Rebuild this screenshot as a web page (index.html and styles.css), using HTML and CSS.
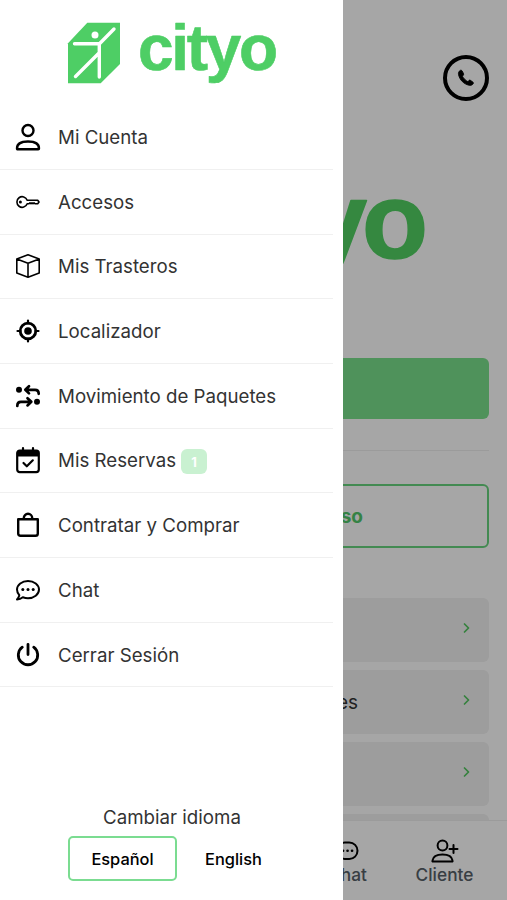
FILE: index.html
```html
<!DOCTYPE html>
<html lang="es">
<head>
  <meta charset="UTF-8">
  <meta name="viewport" content="width=device-width, initial-scale=1">
  <title>cityo</title>
  <link rel="stylesheet" href="styles.css">
</head>
<body>
  <div class="page">
    <header class="topbar">
      <button class="phone" aria-label="Llamar">
        <svg width="18" height="18" viewBox="0 0 20 20"><path d="M5.300 1.700c-.5-.5-1.200-.5-1.800-.1C2 2.600 1.300 4.300 1.700 6.200c1.300 6 5.900 10.600 11.900 11.900 1.700.4 3.300-.3 4.300-1.600.5-.6.4-1.400-.1-1.800l-2.900-2.100c-.5-.4-1.200-.3-1.600.1l-1.300 1.300C9.500 12.700 7.300 10.500 6 8l1.100-1.300c.4-.5.4-1.200.1-1.700z"/></svg>
      </button>
    </header>

    <svg class="hero" width="240" height="110" viewBox="0 0 240 110"><text x="0" y="80" textLength="232" lengthAdjust="spacing">cityo</text></svg>

    <div class="primary"></div>
    <hr>
    <div class="secondary">Acceso</div>

    <div class="cards">
      <div class="card"><span></span><svg class="chevron" viewBox="0 0 8 12"><path d="M1.500 2l4 4-4 4"/></svg></div>
      <div class="card"><span>Movimientos de paquetes</span><svg class="chevron" viewBox="0 0 8 12"><path d="M1.500 2l4 4-4 4"/></svg></div>
      <div class="card"><span></span><svg class="chevron" viewBox="0 0 8 12"><path d="M1.500 2l4 4-4 4"/></svg></div>
      <div class="card"></div>
    </div>

    <nav class="tabs">
      <div class="tab">
        <svg width="26" height="26" viewBox="0 0 26 26"><rect x="1.500" y="4.500" width="21" height="16.500" rx="8.200"/><path d="M8 12.700h.1M12.500 12.700h.1M17 12.700h.1" stroke-width="2.600"/></svg>
        Chat
      </div>
      <div class="tab">
        <svg width="28" height="26" viewBox="0 0 28 26"><circle cx="11.500" cy="7.500" r="4.900"/><path d="M2 23.500c-.5 0-.7-.3-.6-.8C2 18.800 6 16.500 11.500 16.500s9.500 2.300 10.100 6.200c.1.500-.1.800-.6.800zM18.500 11h8M22.500 7v8"/></svg>
        Cliente
      </div>
    </nav>
  </div>

  <div class="backdrop"></div>

  <aside class="drawer">
    <svg class="logo" width="212" height="64" viewBox="0 0 212 64">
      <path d="M0 21.300L19.300 .7H52V42L32.700 61.300H0z"/>
      <circle class="figure-head" cx="27" cy="13" r="3.500"/>
      <path class="figure" d="M6.500 21.700h25L46 7M31.300 21.700V55M31 31L7.500 54.500"/>
      <text x="70" y="48" textLength="140" lengthAdjust="spacing">cityo</text>
    </svg>

    <ul class="menu">
      <li>
        <svg viewBox="0 0 24 24" stroke-width="2.400"><circle cx="12" cy="5.500" r="5.500"/><path d="M1.800 24.300c-.6 0-.8-.3-.8-.8 0-4.300 3.800-7 11-7s11 2.700 11 7c0 .5-.2.800-.8.800z"/></svg>
        Mi Cuenta
      </li>
      <li>
        <svg viewBox="0 0 24 24" stroke-width="1.600"><path d="M11.200 10.200A5.300 5.300 0 1 0 11.200 13.800H13l1-1 1 1 1-1 1 1 1-1 1 1h2.700l1.300-1.800-1.300-1.800z"/><circle class="solid" cx="4.400" cy="12" r="1.500"/></svg>
        Accesos
      </li>
      <li>
        <svg viewBox="0 0 24 24" stroke-width="1.600"><path d="M12 .8L23.200 5v14L12 23.200.8 19V5zM.8 5L12 9.300 23.200 5M12 9.300v13.900"/></svg>
        Mis Trasteros
      </li>
      <li>
        <svg viewBox="0 0 24 24" stroke-width="2.800"><circle cx="12" cy="12" r="7.800"/><circle class="solid" cx="12" cy="12" r="3.800"/><path d="M12 1.500v3M12 19.500v3M1.500 12h3M19.500 12h3" stroke-width="2.200"/></svg>
        Localizador
      </li>
      <li>
        <svg viewBox="0 0 24 24" stroke-width="2.700"><circle class="solid" cx="3" cy="5.800" r="3"/><circle class="solid" cx="21" cy="17.800" r="3"/><path d="M13 2.200L9.300 5.800l3.700 3.600M9.800 5.800H19c2.500 0 3.700 1 3.700 4M11.500 14.200l3.800 3.600-3.800 3.600M14.800 17.800H5c-2.500 0-3.700 1-3.700 4.200"/></svg>
        Movimiento de Paquetes
      </li>
      <li>
        <svg viewBox="0 0 24 24" stroke-width="2.200"><rect x="1.200" y="2.500" width="21.600" height="21.600" rx="2.500"/><path class="solid" d="M1 4.500Q1 2.500 3 2.500h18q2 0 2 2V8.500H1z"/><path d="M7 0v3M17 0v3M7.500 15l3.300 3.300 6-6"/></svg>
        Mis Reservas <span class="badge">1</span>
      </li>
      <li>
        <svg viewBox="0 0 24 24" stroke-width="2.400"><path d="M2.200 6.200h19.600V20.500q0 2.300-2.300 2.300h-15Q2.200 22.800 2.200 20.500zM7.800 6V5a4.200 4.200 0 0 1 8.400 0v1"/></svg>
        Contratar y Comprar
      </li>
      <li>
        <svg viewBox="0 0 24 24" stroke-width="2"><path d="M3.300 17.200C1.800 15.500 1 13.600 1 11.600 1 6.800 6 3 12 3s11 3.800 11 8.600-5 8.600-11 8.600c-1.900 0-3.600-.4-5.200-1-1.600 1.300-3.600 2.100-5.800 2.200 1.300-1.300 2-2.700 2.300-4.200z"/><circle class="solid" cx="6.800" cy="11.500" r="1.500"/><circle class="solid" cx="12" cy="11.500" r="1.500"/><circle class="solid" cx="17.200" cy="11.500" r="1.500"/></svg>
        Chat
      </li>
      <li>
        <svg viewBox="0 0 24 24" stroke-width="2.800"><path d="M12 1.300v10.200M6.300 4.200a9.700 9.700 0 1 0 11.400 0"/></svg>
        Cerrar Sesión
      </li>
    </ul>

    <div class="language">
      <p>Cambiar idioma</p>
      <div class="options">
        <button class="active">Español</button>
        <button>English</button>
      </div>
    </div>
  </aside>
</body>
</html>
```

FILE: styles.css
```css
* {box-sizing: border-box;}
body {margin: 0; height: 900px; overflow: hidden; font-family: Inter, "Liberation Sans", sans-serif; color: #333; background: #fff;}
button {font-family: inherit; cursor: pointer;}
svg {flex: none; fill: none; stroke: #000; stroke-linecap: round; stroke-linejoin: round;}
.solid {fill: #000; stroke: none;}

.page {display: flex; flex-direction: column; height: 900px; padding: 0 18px; overflow: hidden;}
.topbar {display: flex; justify-content: flex-end; padding-top: 55px;}
.phone {display: flex; align-items: center; justify-content: center; width: 46px; height: 46px; padding: 0; border: 4px solid #000; border-radius: 50%; background: none;}
.phone svg {fill: #000; stroke: #000;}
.hero {margin: 77px 0 0 178px; overflow: visible;}
.hero text {font: bold 108px "Liberation Sans", sans-serif; fill: #52d163; stroke: #52d163; stroke-width: 1.5;}
.primary {flex: none; height: 61px; margin-top: 70px; border-radius: 6px; background: #7ae08c;}
hr {width: 100%; margin: 31px 0 33px; border: 0; border-top: 1px solid #eee;}
.secondary {flex: none; height: 64px; padding-right: 124px; border: 2px solid #68d47e; border-radius: 6px; font-size: 19px; font-weight: 700; line-height: 61px; text-align: right; color: #52c86b;}
.cards {display: flex; flex-direction: column; gap: 8px; height: 222px; margin-top: 50px; overflow: hidden;}
.card {display: flex; flex: none; align-items: center; justify-content: space-between; height: 64px; padding: 0 18px 0 0; border-radius: 6px; background: #f1f1f1;}
.card span {width: 340px; text-align: right; font-size: 19px;}
.chevron {width: 8px; height: 12px; margin-bottom: 4px; stroke: #52c85f; stroke-width: 1.7;}
.tabs {display: flex; flex: none; justify-content: flex-end; height: 80px; margin: 0 -18px; padding: 17px 14px 0 0; border-top: 1px solid #eee; background: #fff;}
.tab {display: flex; flex-direction: column; align-items: center; width: 97px; font-size: 17.300px; font-weight: 500; line-height: 22px; color: #566068;}
.tab svg {stroke-width: 2;}

.backdrop {position: fixed; inset: 0; background: rgba(0, 0, 0, .35);}

.drawer {position: fixed; top: 0; bottom: 0; left: 0; display: flex; flex-direction: column; width: 343px; padding-right: 10px; background: #fff;}
.logo {margin: 22px 0 0 68px; fill: #4ece65; stroke: none; overflow: visible;}
.logo text {font: bold 64px "Liberation Sans", sans-serif; stroke: #4ece65; stroke-width: .6;}
.logo .figure {fill: none; stroke: #fff; stroke-width: 3.4;}
.logo .figure-head {fill: #fff;}

.menu {margin: 19.200px 0 0; padding: 0; list-style: none;}
.menu li {display: flex; align-items: center; height: 64.700px; padding: 1px 0 0 16px; border-bottom: 1px solid #f0f0f0; font-size: 18.700px;}
.menu svg {width: 24px; height: 24px; margin: -1px 18px 0 0; overflow: visible;}
.badge {display: flex; align-items: center; justify-content: center; width: 26px; height: 25px; margin: 2px 0 0 5px; border-radius: 6px; font-size: 13px; font-weight: 700; color: #fff; background: #c9f1d1;}

.language {margin-top: auto; padding: 0 0 19px 68px;}
.language p {width: 208px; margin: 0 0 6px; font-size: 18.700px; line-height: 24px; text-align: center;}
.options {display: flex; gap: 2px;}
.options button {width: 109px; height: 45px; padding: 1px 0 0; border: 2px solid transparent; border-radius: 5px; font-size: 16.400px; font-weight: 500; color: #000; background: none;}
.options .active {border-color: #7bdc91;}
```
